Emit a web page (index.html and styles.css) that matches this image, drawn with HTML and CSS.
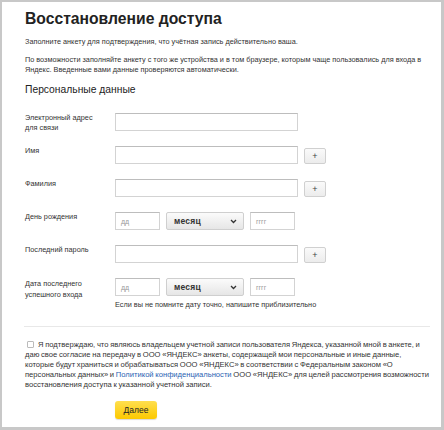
FILE: index.html
```html
<!DOCTYPE html>
<html lang="ru">
<head>
<meta charset="utf-8">
<title>Восстановление доступа</title>
<link rel="stylesheet" href="styles.css">
</head>
<body>
<div class="page">
  <h1 class="title">Восстановление доступа</h1>
  <p class="intro">Заполните анкету для подтверждения, что учётная запись действительно ваша.</p>
  <p class="intro intro-second">По возможности заполняйте анкету с того же устройства и в том браузере, которым чаще пользовались для входа в Яндекс. Введенные вами данные проверяются автоматически.</p>
  <h2 class="section">Персональные данные</h2>

  <div class="form">
    <div class="row">
      <div class="label">Электронный адрес для связи</div>
      <div class="controls"><span class="field field-wide"></span></div>
    </div>
    <div class="row">
      <div class="label">Имя</div>
      <div class="controls"><span class="field field-wide"></span><span class="plus">+</span></div>
    </div>
    <div class="row">
      <div class="label">Фамилия</div>
      <div class="controls"><span class="field field-wide"></span><span class="plus">+</span></div>
    </div>
    <div class="row">
      <div class="label">День рождения</div>
      <div class="controls">
        <span class="field field-short"><span class="ph">дд</span></span>
        <span class="select"><span class="select-text">месяц</span><svg class="chev" width="7" height="5" viewBox="0 0 7 5"><path d="M1 1l2.5 2.5L6 1" fill="none" stroke="#333" stroke-width="1.3"/></svg></span>
        <span class="field field-short"><span class="ph">гггг</span></span>
      </div>
    </div>
    <div class="row">
      <div class="label">Последний пароль</div>
      <div class="controls"><span class="field field-wide"></span><span class="plus">+</span></div>
    </div>
    <div class="row row-last">
      <div class="label">Дата последнего успешного входа</div>
      <div class="controls-col">
        <div class="controls">
          <span class="field field-short"><span class="ph">дд</span></span>
          <span class="select"><span class="select-text">месяц</span><svg class="chev" width="7" height="5" viewBox="0 0 7 5"><path d="M1 1l2.5 2.5L6 1" fill="none" stroke="#333" stroke-width="1.3"/></svg></span>
          <span class="field field-short"><span class="ph">гггг</span></span>
        </div>
        <div class="hint">Если вы не помните дату точно, напишите приблизительно</div>
      </div>
    </div>
  </div>

  <div class="sep"></div>

  <p class="consent"><span class="checkbox"></span>Я подтверждаю, что являюсь владельцем учетной записи пользователя Яндекса, указанной мной в анкете, и даю свое согласие на передачу в ООО «ЯНДЕКС» анкеты, содержащей мои персональные и иные данные, которые будут храниться и обрабатываться ООО «ЯНДЕКС» в соответствии с Федеральным законом «О персональных данных» и <a class="link" href="#">Политикой конфиденциальности</a> ООО «ЯНДЕКС» для целей рассмотрения возможности восстановления доступа к указанной учетной записи.</p>

  <div class="actions"><span class="btn">Далее</span></div>
</div>
</body>
</html>
```

FILE: styles.css
```css
* { box-sizing: border-box; }
html, body { margin: 0; padding: 0; background: #fff; }
body { font-family: "Liberation Sans", Arial, sans-serif; color: #333; }

.page {
  width: 444px;
  height: 430px;
  border: 2px solid #c8c8c8;
  border-bottom-width: 3px;
  border-right-width: 3px;
  padding: 7px 9px 0 23px;
  overflow: hidden;
  background: #fff;
}

.title {
  margin: 0;
  font-size: 15.7px;
  line-height: 20px;
  font-weight: bold;
  color: #222;
}

.intro {
  margin: 8px 0 0;
  padding-right: 3px;
  font-size: 7.3px;
  line-height: 10px;
  color: #333;
}

.section {
  margin: 8px 0 0;
  font-size: 10.3px;
  line-height: 13px;
  font-weight: normal;
  color: #222;
}

.form {
  margin-top: 17px;
  display: flex;
  flex-direction: column;
  gap: 15px;
}

.row { display: flex; }

.label {
  width: 90px;
  flex: none;
  height: 18px;
  padding-right: 14px;
  font-size: 7.3px;
  line-height: 10px;
  color: #333;
}

.row-last .label { line-height: 11px; }

.controls { display: flex; align-items: flex-start; gap: 6px; height: 18px; }
.controls-col { display: flex; flex-direction: column; }

.field {
  display: flex;
  align-items: center;
  height: 18px;
  border: 1px solid #d3d3d3;
  border-top-color: #bdbdbd;
  background: #fff;
}
.field-wide { width: 183px; }
.field-short { width: 45px; padding-left: 5px; }

.ph { font-size: 7px; color: #9a9a9a; }

.plus {
  margin-top: 2px;
  width: 22px;
  height: 16px;
  display: flex;
  align-items: center;
  justify-content: center;
  border: 1px solid #d0d0d0;
  border-radius: 2px;
  background: linear-gradient(#fafafa, #ececec);
  font-size: 9px;
  color: #444;
}

.select {
  width: 78px;
  height: 18px;
  display: flex;
  align-items: center;
  justify-content: space-between;
  padding: 0 6px 0 7px;
  border: 1px solid #cfcfcf;
  border-radius: 2px;
  background: linear-gradient(#fbfbfb, #e6e6e6);
}
.select-text { font-size: 8.5px; font-weight: bold; color: #333; letter-spacing: 0.2px; }
.chev { display: block; }

.hint {
  margin-top: 4px;
  font-size: 7.3px;
  line-height: 10px;
  color: #333;
}

.sep {
  margin: 16px 2px 0 -1px;
  height: 1px;
  background: #e8e8e8;
}

.consent {
  margin: 13px 0 0;
  font-size: 7.6px;
  line-height: 10px;
  word-spacing: -0.4px;
  color: #333;
}

.checkbox {
  display: inline-block;
  width: 7px;
  height: 7px;
  margin: 0 4px 0 2px;
  vertical-align: -1px;
  border: 1px solid #bbb;
  border-radius: 1px;
  background: #fff;
}

.link { color: #2a62b3; text-decoration: none; }

.actions {
  margin-top: 11px;
  padding-left: 90px;
  display: flex;
}

.btn {
  width: 42px;
  height: 18px;
  display: flex;
  align-items: center;
  justify-content: center;
  border-radius: 3px;
  background: linear-gradient(#ffdf4f, #fcc900);
  box-shadow: 0 1px 1px rgba(0,0,0,0.15);
  font-size: 8.5px;
  color: #222;
}
```
